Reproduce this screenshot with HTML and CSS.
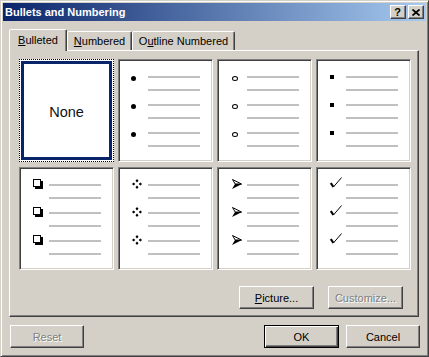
FILE: index.html
```html
<!DOCTYPE html>
<html>
<head>
<meta charset="utf-8">
<link rel="stylesheet" href="styles.css">
</head>
<body>
<div class="window">
  <div class="titlebar">
    <span class="title">Bullets and Numbering</span>
    <div class="tb-buttons">
      <span class="tbtn help">?</span>
      <span class="tbtn close"><svg width="8" height="7" viewBox="0 0 8 7"><path d="M0.5 0.5 L7.5 6.5 M7.5 0.5 L0.5 6.5" stroke="#000" stroke-width="1.7" fill="none"/></svg></span>
    </div>
  </div>
  <div class="content">
    <div class="tabs">
      <div class="tab active"><u>B</u>ulleted</div>
      <div class="tab t-num"><u>N</u>umbered</div>
      <div class="tab t-out">O<u>u</u>tline Numbered</div>
    </div>
    <div class="panel">
      <div class="grid">
        <div class="cell selected"><span class="none">None</span></div>

        <div class="cell">
          <div class="entry"><span class="b dot"></span><i class="ln"></i><i class="ln l2"></i></div>
          <div class="entry"><span class="b dot"></span><i class="ln"></i><i class="ln l2"></i></div>
          <div class="entry"><span class="b dot"></span><i class="ln"></i><i class="ln l2"></i></div>
        </div>

        <div class="cell">
          <div class="entry"><span class="b circ"></span><i class="ln"></i><i class="ln l2"></i></div>
          <div class="entry"><span class="b circ"></span><i class="ln"></i><i class="ln l2"></i></div>
          <div class="entry"><span class="b circ"></span><i class="ln"></i><i class="ln l2"></i></div>
        </div>

        <div class="cell">
          <div class="entry"><span class="b sq"></span><i class="ln"></i><i class="ln l2"></i></div>
          <div class="entry"><span class="b sq"></span><i class="ln"></i><i class="ln l2"></i></div>
          <div class="entry"><span class="b sq"></span><i class="ln"></i><i class="ln l2"></i></div>
        </div>

        <div class="cell">
          <div class="entry"><span class="b box"></span><i class="ln"></i><i class="ln l2"></i></div>
          <div class="entry"><span class="b box"></span><i class="ln"></i><i class="ln l2"></i></div>
          <div class="entry"><span class="b box"></span><i class="ln"></i><i class="ln l2"></i></div>
        </div>

        <div class="cell">
          <div class="entry"><svg class="b dia" width="10" height="10" viewBox="0 0 10 10"><path d="M5 0 L6.5 1.7 L5 3.4 L3.5 1.7Z M1.6 3.5 L3.3 5 L1.6 6.5 L-0.1 5Z M8.4 3.5 L10.1 5 L8.4 6.5 L6.7 5Z M5 6.6 L6.5 8.3 L5 10 L3.5 8.3Z" fill="#000"/></svg><i class="ln"></i><i class="ln l2"></i></div>
          <div class="entry"><svg class="b dia" width="10" height="10" viewBox="0 0 10 10"><path d="M5 0 L6.5 1.7 L5 3.4 L3.5 1.7Z M1.6 3.5 L3.3 5 L1.6 6.5 L-0.1 5Z M8.4 3.5 L10.1 5 L8.4 6.5 L6.7 5Z M5 6.6 L6.5 8.3 L5 10 L3.5 8.3Z" fill="#000"/></svg><i class="ln"></i><i class="ln l2"></i></div>
          <div class="entry"><svg class="b dia" width="10" height="10" viewBox="0 0 10 10"><path d="M5 0 L6.5 1.7 L5 3.4 L3.5 1.7Z M1.6 3.5 L3.3 5 L1.6 6.5 L-0.1 5Z M8.4 3.5 L10.1 5 L8.4 6.5 L6.7 5Z M5 6.6 L6.5 8.3 L5 10 L3.5 8.3Z" fill="#000"/></svg><i class="ln"></i><i class="ln l2"></i></div>
        </div>

        <div class="cell">
          <div class="entry"><svg class="b arrow" width="10" height="10" viewBox="0 0 10 10"><path d="M0.5 0.5 L9.5 5 L3.2 5 Z" fill="#fff" stroke="#000" stroke-width="1" stroke-linejoin="round"/><path d="M3 5 L10 5 L0 10 Z" fill="#000"/></svg><i class="ln"></i><i class="ln l2"></i></div>
          <div class="entry"><svg class="b arrow" width="10" height="10" viewBox="0 0 10 10"><path d="M0.5 0.5 L9.5 5 L3.2 5 Z" fill="#fff" stroke="#000" stroke-width="1" stroke-linejoin="round"/><path d="M3 5 L10 5 L0 10 Z" fill="#000"/></svg><i class="ln"></i><i class="ln l2"></i></div>
          <div class="entry"><svg class="b arrow" width="10" height="10" viewBox="0 0 10 10"><path d="M0.5 0.5 L9.5 5 L3.2 5 Z" fill="#fff" stroke="#000" stroke-width="1" stroke-linejoin="round"/><path d="M3 5 L10 5 L0 10 Z" fill="#000"/></svg><i class="ln"></i><i class="ln l2"></i></div>
        </div>

        <div class="cell">
          <div class="entry"><svg class="b check" width="12" height="11" viewBox="0 0 12 11"><path d="M0.8 6 L3.4 10" stroke="#000" stroke-width="2.2" fill="none"/><path d="M3.4 10 L11.6 0.5" stroke="#000" stroke-width="1" fill="none"/></svg><i class="ln"></i><i class="ln l2"></i></div>
          <div class="entry"><svg class="b check" width="12" height="11" viewBox="0 0 12 11"><path d="M0.8 6 L3.4 10" stroke="#000" stroke-width="2.2" fill="none"/><path d="M3.4 10 L11.6 0.5" stroke="#000" stroke-width="1" fill="none"/></svg><i class="ln"></i><i class="ln l2"></i></div>
          <div class="entry"><svg class="b check" width="12" height="11" viewBox="0 0 12 11"><path d="M0.8 6 L3.4 10" stroke="#000" stroke-width="2.2" fill="none"/><path d="M3.4 10 L11.6 0.5" stroke="#000" stroke-width="1" fill="none"/></svg><i class="ln"></i><i class="ln l2"></i></div>
        </div>
      </div>
      <div class="panel-buttons">
        <button class="btn pic"><u>P</u>icture...</button>
        <button class="btn cust disabled">Customize...</button>
      </div>
    </div>
    <div class="footer">
      <button class="btn reset disabled">Reset</button>
      <span class="spacer"></span>
      <button class="btn default">OK</button>
      <button class="btn cancel">Cancel</button>
    </div>
  </div>
</div>
</body>
</html>
```
FILE: styles.css
```css
* { box-sizing: border-box; }
html, body { margin: 0; padding: 0; background: #d4d0c8; }
body {
  font-family: "Liberation Sans", Arial, sans-serif;
  font-size: 11px;
  color: #000;
}
.window {
  width: 429px;
  height: 357px;
  background: #d4d0c8;
  border: 1px solid;
  border-color: #d4d0c8 #404040 #404040 #d4d0c8;
  box-shadow: inset 1px 1px 0 #fff, inset -1px -1px 0 #808080;
  padding: 2px;
}
.titlebar {
  height: 18px;
  display: flex;
  align-items: center;
  padding-left: 2px;
  background: linear-gradient(to right, #0a246a, #a6caf0);
}
.title {
  color: #fff;
  font-weight: bold;
  font-size: 11px;
  line-height: 18px;
  flex: 1;
}
.tb-buttons {
  display: flex;
  gap: 2px;
  margin-right: 2px;
}
.tbtn {
  width: 16px;
  height: 14px;
  background: #d4d0c8;
  border: 1px solid;
  border-color: #fff #404040 #404040 #fff;
  box-shadow: inset -1px -1px 0 #808080;
  display: flex;
  align-items: center;
  justify-content: center;
}
.tbtn.help {
  font-weight: bold;
  font-size: 11px;
  line-height: 12px;
  padding-right: 1px;
}
.tbtn.close svg { display: block; margin-right: 1px; }
.content {
  padding: 0 6px;
}
.tabs {
  display: flex;
  align-items: flex-end;
  margin-top: 8px;
  height: 21px;
}
.tab {
  height: 19px;
  border: 1px solid;
  border-bottom: none;
  border-color: #fff #404040 transparent #fff;
  border-radius: 2px 2px 0 0;
  box-shadow: inset -1px 0 0 #808080;
  background: #d4d0c8;
  text-align: center;
  line-height: 13px;
  padding-top: 3px;
}
.tab.active {
  width: 58px;
  height: 22px;
  margin-bottom: -1px;
  padding-top: 4px;
  position: relative;
  z-index: 1;
}
.t-num { width: 65px; }
.t-out { width: 103px; }
.panel {
  width: 410px;
  height: 267px;
  border: 1px solid;
  border-color: #fff #404040 #404040 #fff;
  box-shadow: inset -1px -1px 0 #808080;
  padding: 8px 0 0 9px;
}
.grid {
  display: grid;
  grid-template-columns: repeat(4, 95px);
  grid-template-rows: repeat(2, 103px);
  column-gap: 4px;
  row-gap: 5px;
}
.cell {
  background: #fff;
  border: 1px solid;
  border-color: #808080 #fff #fff #808080;
  box-shadow: inset 1px 1px 0 #404040, inset -1px -1px 0 #d4d0c8;
  padding-top: 16px;
}
.cell.selected {
  border: 1px dotted #000;
  box-shadow: inset 0 0 0 1px #fff, inset 0 0 0 4px #0a246a;
  padding: 0;
  display: flex;
  align-items: center;
  justify-content: center;
}
.none {
  font-size: 14.5px;
  color: #111;
  margin-top: 2px;
}
.entry {
  display: grid;
  grid-template-columns: 29px 52px;
  grid-template-rows: 13px 15px;
}
.ln {
  display: block;
  grid-column: 2;
  grid-row: 1;
  height: 2px;
  background: #c0c0c0;
  align-self: start;
}
.ln.l2 { grid-row: 2; }
.b {
  grid-column: 1;
  grid-row: 1;
  align-self: start;
  justify-self: start;
  display: block;
}
.dot {
  width: 5px;
  height: 5px;
  border-radius: 50%;
  background: #000;
  margin: 0 0 0 12px;
}
.circ {
  width: 6px;
  height: 5px;
  border-radius: 50%;
  border: 1px solid #000;
  margin: 0 0 0 14px;
}
.sq {
  width: 4px;
  height: 4px;
  background: #000;
  margin: -1px 0 0 13px;
}
.box {
  width: 8px;
  height: 8px;
  border: 1px solid #000;
  box-shadow: 2px 2px 0 0 #000;
  margin: -5px 0 0 13px;
}
.dia { margin: -5px 0 0 13px; }
.arrow { margin: -5px 0 0 14px; }
.check { margin: -7px 0 0 13px; }
.panel-buttons {
  display: flex;
  justify-content: flex-end;
  gap: 14px;
  margin-top: 16px;
  padding-right: 15px;
}
.btn {
  font-family: "Liberation Sans", Arial, sans-serif;
  font-size: 11px;
  color: #000;
  width: 75px;
  height: 23px;
  padding: 0;
  background: #d4d0c8;
  border: 1px solid;
  border-color: #fff #404040 #404040 #fff;
  box-shadow: inset -1px -1px 0 #808080;
  border-radius: 0;
}
.btn.disabled {
  color: #808080;
  text-shadow: 1px 1px 0 #fff;
}
.footer {
  display: flex;
  margin-top: 8px;
  padding-left: 1px;
  gap: 7px;
}
.spacer { flex: 1; }
.btn.reset { width: 74px; }
.btn.default {
  border: 1px solid #000;
  box-shadow: inset 1px 1px 0 #fff, inset -1px -1px 0 #404040, inset -2px -2px 0 #808080;
}
.btn.cancel { width: 74px; }
```
